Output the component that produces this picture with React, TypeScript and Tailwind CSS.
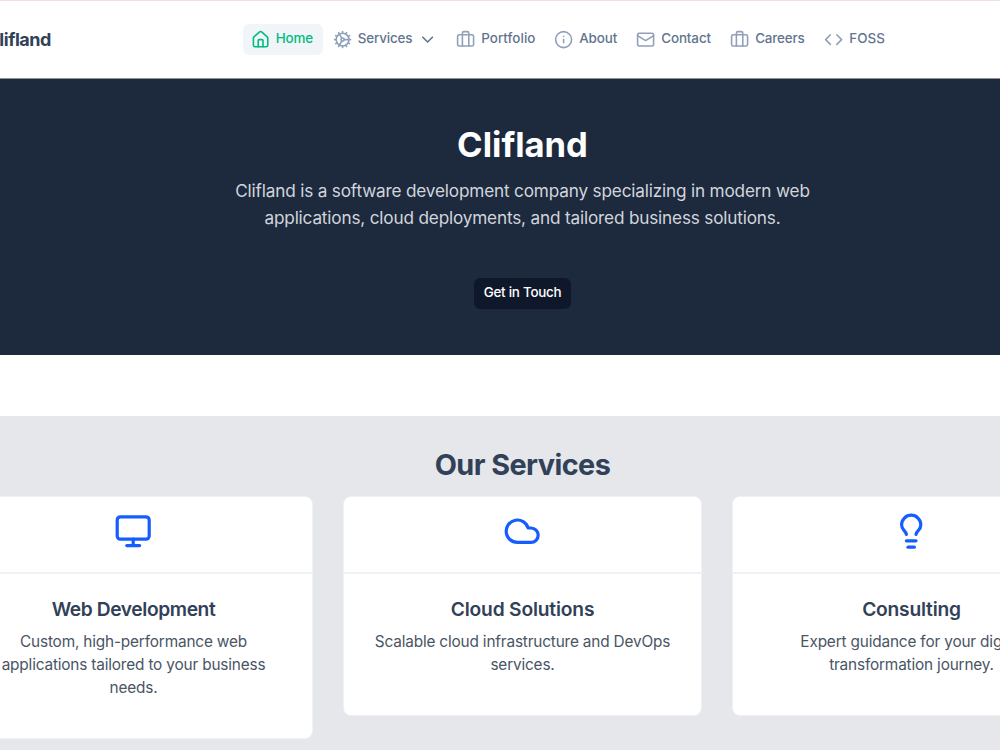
import { Briefcase, ChevronDown, Cloud, Code, Cog, House, Info, Lightbulb, Mail, Monitor } from "lucide-react";
import type { LucideIcon } from "lucide-react";

type NavItem = { label: string; icon: LucideIcon; item: string; text: string; active?: boolean; menu?: boolean };

const nav: NavItem[] = [
  { label: "Home", icon: House, item: "w-[79.5px] mr-[2.5px] pl-[8px]", text: "ml-[5.5px] tracking-[-0.15px]", active: true },
  { label: "Services", icon: Cog, item: "w-[111px] mr-[12px] pl-[8px]", text: "ml-[5.5px] tracking-[-0.15px]", menu: true },
  { label: "Portfolio", icon: Briefcase, item: "w-[86px] mr-[12px] pl-[8px]", text: "ml-[6px] tracking-[0.05px]" },
  { label: "About", icon: Info, item: "w-[70px] mr-[12px] pl-[8px]", text: "ml-[6px] tracking-[-0.1px]" },
  { label: "Contact", icon: Mail, item: "w-[82px] mr-[12px] pl-[8px]", text: "ml-[6px] tracking-[-0.1px]" },
  { label: "Careers", icon: Briefcase, item: "w-[82px] mr-[12px] pl-[8px]", text: "ml-[6px] tracking-[-0.15px]" },
  { label: "FOSS", icon: Code, item: "w-[80px] pl-[8px]", text: "ml-[6px] tracking-[0.1px]" },
];

const services = [
  { title: "Web Development", icon: Monitor, heading: "tracking-[-0.4px]", lines: ["Custom, high-performance web", "applications tailored to your business", "needs."] },
  { title: "Cloud Solutions", icon: Cloud, heading: "tracking-[-0.17px]", lines: ["Scalable cloud infrastructure and DevOps", "services."] },
  { title: "Consulting", icon: Lightbulb, heading: "tracking-[-0.2px]", lines: ["Expert guidance for your digital", "transformation journey."] },
];

function Header() {
  return (
    <header className="flex h-[78px] items-center border-t border-[#f3dfe3] bg-white">
      <div className="w-[97px] text-right text-[18px] font-bold leading-none tracking-[-0.45px] text-[#314158]">Clifland</div>
      <nav className="ml-[192px] flex items-center">
        {nav.map(({ label, icon: Icon, item, text, active, menu }) => (
          <a
            key={label}
            className={`flex h-[31px] items-center rounded-md text-[13.4px] font-medium ${item} ${
              active ? "bg-[#f1f5f9] text-[#00bc7d]" : "text-[#62748e]"
            }`}
          >
            <Icon className={`size-[19.2px] shrink-0 ${active ? "" : "text-[#90a1b9]"}`} strokeWidth={2} />
            <span className={`whitespace-nowrap pb-[2px] ${text}`}>{label}</span>
            {menu && <ChevronDown className="ml-[6px] size-[19.2px] shrink-0" strokeWidth={2} />}
          </a>
        ))}
      </nav>
    </header>
  );
}

export default function App() {
  return (
    <div className="h-[750px] w-[1000px] overflow-hidden bg-white font-['Inter',sans-serif]">
      <div className="-ml-[46px] w-[1137px]">
        <Header />
        <section className="flex h-[277px] flex-col items-center border-t border-[#90939a] bg-[#1d293d] pt-[44px] text-center">
          <h1 className="text-[34.6px] font-bold leading-[42px] text-white">Clifland</h1>
          <p className="mt-[12px] text-[17.2px] leading-[27px] tracking-[-0.18px] text-[#d1d5dc]">
            <span className="block whitespace-nowrap">Clifland is a software development company specializing in modern web</span>
            <span className="block whitespace-nowrap">applications, cloud deployments, and tailored business solutions.</span>
          </p>
          <button className="mt-[47px] h-[31px] w-[97px] whitespace-nowrap rounded-md bg-[#0f172b] pb-[3px] text-[13.4px] font-medium tracking-[-0.25px] text-white">
            Get in Touch
          </button>
        </section>
        <section className="mt-[61px] h-[360px] bg-[#e5e7eb] pt-[30px]">
          <h2 className="text-center text-[28.8px] font-bold leading-[38px] tracking-[-0.55px] text-[#314158]">Our Services</h2>
          <div className="mt-[12px] grid grid-cols-3 items-start gap-[30px]">
            {services.map(({ title, icon: Icon, heading, lines }) => (
              <article key={title} className="rounded-lg border border-[#eef2f7] bg-white text-center">
                <div className="flex h-[77px] items-center justify-center border-b-2 border-[#eff2f5] pb-[6px]">
                  <Icon className="size-[38.4px] text-[#155dfc]" strokeWidth={2} />
                </div>
                <div className="px-[23px] pb-[39px] pt-[22px]">
                  <h3 className={`text-[19.2px] font-semibold leading-[27px] text-[#314158] ${heading}`}>{title}</h3>
                  <p className="mt-[7px] text-[15.36px] leading-[23px] tracking-[-0.17px] text-[#4a5565]">
                    {lines.map((line) => (
                      <span key={line} className="block whitespace-nowrap">{line}</span>
                    ))}
                  </p>
                </div>
              </article>
            ))}
          </div>
        </section>
      </div>
    </div>
  );
}
